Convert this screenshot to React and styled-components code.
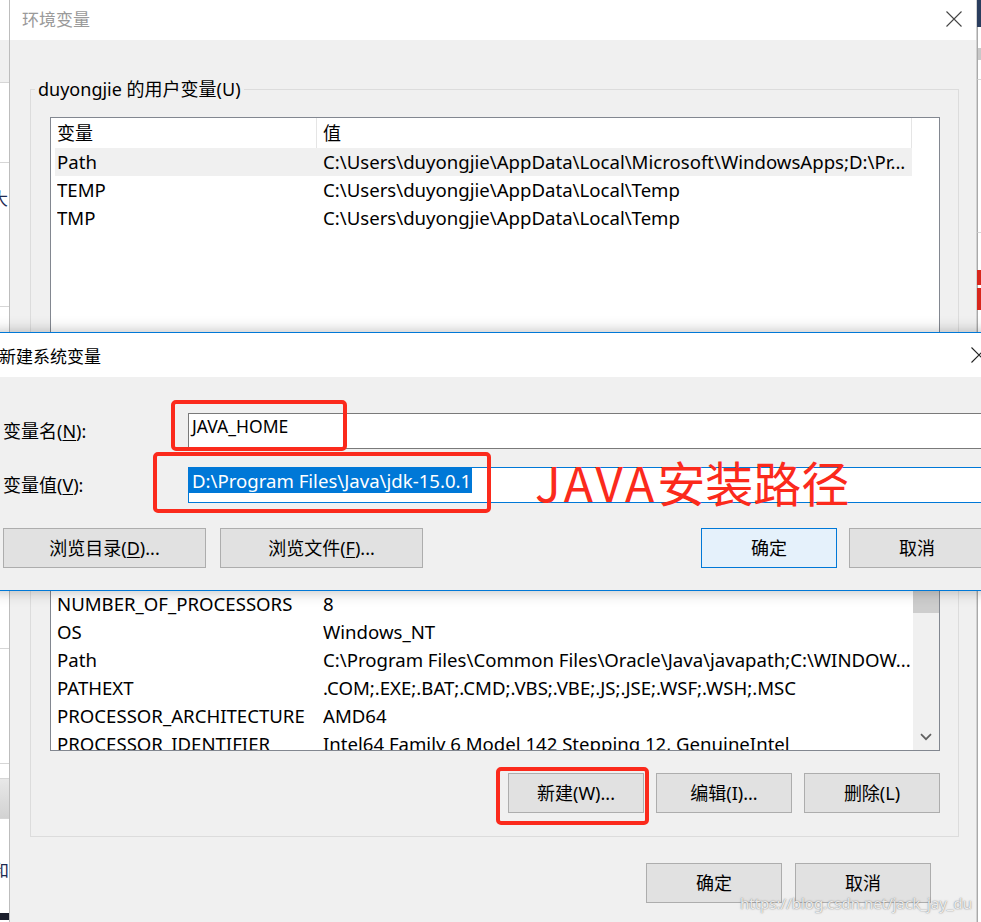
import React from 'react';
import styled, { createGlobalStyle } from 'styled-components';

const FONT = `"Noto Sans", "Noto Sans CJK SC", sans-serif`;

const GlobalStyle = createGlobalStyle`
  html, body { margin: 0; padding: 0; background: #fff; }
  body { font-family: ${FONT}; }
  *, *::before, *::after { box-sizing: border-box; }
`;

const Desktop = styled.div`
  position: relative;
  width: 981px;
  height: 922px;
  overflow: hidden;
  background: #fff;
  font-family: ${FONT};
  font-size: 18px;
  color: #000;
`;

/* ---------- background windows (slivers at the edges) ---------- */
const SideWindow = styled.div`
  position: absolute;
  top: 0;
  left: ${(p) => p.$left}px;
  width: ${(p) => p.$width}px;
  height: 922px;
  display: flex;
  flex-direction: column;
  background: #fff;
  overflow: hidden;
`;

const Strip = styled.div`
  flex-shrink: 0;
  height: ${(p) => p.$h}px;
  background: ${(p) => p.$bg || 'transparent'};
  border-bottom: ${(p) => (p.$line ? '1px solid #d6d6d6' : 'none')};
  border-left: ${(p) => (p.$edge ? '1px solid #a9a9a9' : 'none')};
`;

const SliverGlyph = styled.div`
  flex-shrink: 0;
  height: ${(p) => p.$h}px;
  line-height: ${(p) => p.$h}px;
  margin-left: ${(p) => p.$shift}px;
  font-size: 17px;
  color: #1d2a52;
  white-space: nowrap;
`;

/* ---------- main window ---------- */
const MainWindow = styled.div`
  position: absolute;
  left: 9px;
  top: 0;
  width: 968px;
  height: 922px;
  border-left: 1px solid #bdbdbd;
  border-right: 1px solid #d2d2d2;
  background: #f0f0f0;
  display: flex;
  flex-direction: column;
`;

const TitleBar = styled.div`
  flex-shrink: 0;
  height: ${(p) => p.$h}px;
  background: #fff;
  display: flex;
  align-items: center;
  justify-content: space-between;
  padding: 0 ${(p) => p.$pr}px ${(p) => p.$pb || 0}px ${(p) => p.$pl}px;
  color: ${(p) => (p.$inactive ? '#9a9a9a' : '#000')};
  font-size: 17px;
  white-space: nowrap;
`;

const CloseGlyph = styled.svg`
  display: block;
  flex-shrink: 0;
`;

const WindowBody = styled.div`
  flex: 1;
  display: flex;
  flex-direction: column;
  padding: 37px 17px 0 20px;
`;

const GroupBox = styled.fieldset`
  margin: ${(p) => p.$mt || 0}px 0 0 0;
  padding: 16px 18px 23px 19px;
  border: 1px solid #dcdcdc;
  min-width: 0;
  display: flex;
  flex-direction: column;
`;

const GroupLegend = styled.legend`
  margin-left: -15px;
  padding: 0 3px;
  font-size: 18px;
  line-height: 24px;
`;

const ListBox = styled.div`
  flex-shrink: 0;
  height: ${(p) => p.$h}px;
  border: 1px solid #828790;
  background: #fff;
  display: flex;
  overflow: hidden;
`;

const ListMain = styled.div`
  width: 862px;
  flex-shrink: 0;
  display: flex;
  flex-direction: column;
  overflow: hidden;
`;

const ListHeader = styled.div`
  flex-shrink: 0;
  height: 30px;
  display: flex;
`;

const HeaderCell = styled.div`
  width: ${(p) => p.$w}px;
  flex-shrink: 0;
  height: 30px;
  line-height: 30px;
  padding-left: 6px;
  border-right: 1px solid #e5e5e5;
  white-space: nowrap;
`;

const RowsViewport = styled.div`
  flex: 1;
  overflow: hidden;
`;

const RowsTrack = styled.div`
  display: flex;
  flex-direction: column;
  margin-top: ${(p) => -(p.$scroll || 0)}px;
`;

const Row = styled.div`
  flex-shrink: 0;
  display: flex;
  height: 28px;
  line-height: 28px;
  margin-left: 4px;
  width: 857px;
  padding-left: 2px;
  font-size: 18.6px;
  background: ${(p) => (p.$selected ? '#f0f0f0' : 'transparent')};
  white-space: nowrap;
`;

const NameCell = styled.div`
  width: 266px;
  flex-shrink: 0;
  overflow: hidden;
`;

const ValueCell = styled.div`
  flex: 1;
  min-width: 0;
  overflow: hidden;
`;

const ScrollGap = styled.div`
  flex: 1;
  background: #fff;
`;

const ScrollBar = styled.div`
  width: 26px;
  flex-shrink: 0;
  background: #f0f0f0;
  display: flex;
  flex-direction: column;
`;

const ScrollArrow = styled.div`
  flex-shrink: 0;
  height: 26px;
  display: flex;
  align-items: center;
  justify-content: center;
`;

const ScrollThumb = styled.div`
  flex-shrink: 0;
  height: ${(p) => p.$h}px;
  background: #cdcdcd;
`;

const ScrollTrack = styled.div`
  flex: 1;
`;

const ButtonRow = styled.div`
  display: flex;
  align-items: center;
  justify-content: ${(p) => p.$justify || 'flex-end'};
  gap: ${(p) => p.$gap || 12}px;
  margin-top: ${(p) => p.$mt || 0}px;
  margin-right: ${(p) => p.$mr || 0}px;
`;

const Button = styled.button`
  width: ${(p) => p.$w || 136}px;
  height: 40px;
  flex-shrink: 0;
  margin: 0;
  padding: 0;
  border: 1px solid ${(p) => (p.$default ? '#0078d7' : '#adadad')};
  background: ${(p) => (p.$default ? '#e5f1fb' : '#e1e1e1')};
  font-family: ${FONT};
  font-size: 18px;
  color: #000;
  line-height: 38px;
  white-space: nowrap;
`;

const Accel = styled.span`
  text-decoration: underline;
  text-underline-offset: 2px;
  text-decoration-thickness: 1px;
`;

/* ---------- dialog ---------- */
const Dialog = styled.div`
  position: absolute;
  left: -12px;
  top: 332px;
  width: 1010px;
  border: 1px solid #0078d7;
  background: #f0f0f0;
  box-shadow: 0 0 14px rgba(0, 0, 0, 0.28);
  display: flex;
  flex-direction: column;
`;

const DialogBody = styled.div`
  display: flex;
  flex-direction: column;
  padding: 36px 12px 22px 14px;
`;

const FieldRow = styled.div`
  display: flex;
  align-items: center;
  margin-top: ${(p) => p.$mt || 0}px;
`;

const FieldLabel = styled.div`
  flex: 0 0 185px;
  white-space: nowrap;
  line-height: 24px;
`;

const TextBox = styled.div`
  flex: 1;
  height: 36px;
  border: 1px solid ${(p) => (p.$focused ? '#0078d7' : '#7a7a7a')};
  background: #fff;
  display: flex;
  align-items: flex-start;
  padding-top: 0;
  white-space: nowrap;
  overflow: hidden;
`;

const BoxText = styled.span`
  line-height: 25px;
  padding: 0 1px 0 3px;
  font-size: ${(p) => (p.$selected ? '18.6px' : '17.5px')};
  background: ${(p) => (p.$selected ? '#0078d7' : 'transparent')};
  color: ${(p) => (p.$selected ? '#fff' : '#000')};
`;

const ButtonGroup = styled.div`
  display: flex;
  gap: ${(p) => p.$gap}px;
  margin-left: ${(p) => (p.$push ? 'auto' : '0')};
`;

/* ---------- annotations over the screenshot ---------- */
const RedBox = styled.div`
  position: absolute;
  left: ${(p) => p.$x}px;
  top: ${(p) => p.$y}px;
  width: ${(p) => p.$w}px;
  height: ${(p) => p.$h}px;
  border: 4px solid #fb2a1c;
  border-radius: 5px;
  pointer-events: none;
`;

const RedNote = styled.div`
  position: absolute;
  left: 535px;
  top: 457px;
  font-family: "Noto Sans CJK SC", sans-serif;
  font-size: 48px;
  line-height: 48px;
  color: #fb2a1c;
  white-space: nowrap;
`;

const LatinPart = styled.span`
  letter-spacing: 3px;
`;

const Watermark = styled.div`
  position: absolute;
  right: 9px;
  top: 893px;
  font-size: 15px;
  line-height: 20px;
  color: rgba(255, 255, 255, 0.85);
  text-shadow: 0 0 1px rgba(90, 90, 90, 0.7), 0 0 2px rgba(120, 120, 120, 0.5);
  white-space: nowrap;
`;

/* ---------- data ---------- */
const userRows = [
  { name: 'Path', value: 'C:\\Users\\duyongjie\\AppData\\Local\\Microsoft\\WindowsApps;D:\\Pr...', selected: true },
  { name: 'TEMP', value: 'C:\\Users\\duyongjie\\AppData\\Local\\Temp' },
  { name: 'TMP', value: 'C:\\Users\\duyongjie\\AppData\\Local\\Temp' },
];

const systemRows = [
  { name: 'CLASSPATH', value: '.;%JAVA_HOME%\\lib' },
  { name: 'ComSpec', value: 'C:\\WINDOWS\\system32\\cmd.exe' },
  { name: 'DriverData', value: 'C:\\Windows\\System32\\Drivers\\DriverData' },
  { name: 'NUMBER_OF_PROCESSORS', value: '8' },
  { name: 'OS', value: 'Windows_NT' },
  { name: 'Path', value: 'C:\\Program Files\\Common Files\\Oracle\\Java\\javapath;C:\\WINDOW...' },
  { name: 'PATHEXT', value: '.COM;.EXE;.BAT;.CMD;.VBS;.VBE;.JS;.JSE;.WSF;.WSH;.MSC' },
  { name: 'PROCESSOR_ARCHITECTURE', value: 'AMD64' },
  { name: 'PROCESSOR_IDENTIFIER', value: 'Intel64 Family 6 Model 142 Stepping 12, GenuineIntel' },
  { name: 'PROCESSOR_LEVEL', value: '6' },
  { name: 'PROCESSOR_REVISION', value: '8e0c' },
];

const CloseIcon = ({ color = '#333' }) => (
  <CloseGlyph width="16" height="16" viewBox="0 0 16 16">
    <path d="M0.5 0.5L15.5 15.5M15.5 0.5L0.5 15.5" stroke={color} strokeWidth="1.1" fill="none" />
  </CloseGlyph>
);

const ChevronDown = () => (
  <svg width="12" height="8" viewBox="0 0 12 8">
    <path d="M1 1.2L6 6.2L11 1.2" stroke="#606060" strokeWidth="1.7" fill="none" />
  </svg>
);

function VarList({ rows, height, scroll, withScrollbar }) {
  return (
    <ListBox $h={height}>
      <ListMain>
        <ListHeader>
          <HeaderCell $w={266}>变量</HeaderCell>
          <HeaderCell $w={595}>值</HeaderCell>
        </ListHeader>
        <RowsViewport>
          <RowsTrack $scroll={scroll}>
            {rows.map((r, i) => (
              <Row key={i} $selected={r.selected}>
                <NameCell>{r.name}</NameCell>
                <ValueCell>{r.value}</ValueCell>
              </Row>
            ))}
          </RowsTrack>
        </RowsViewport>
      </ListMain>
      {withScrollbar ? (
        <ScrollBar>
          <ScrollArrow />
          <ScrollThumb $h={89} />
          <ScrollTrack />
          <ScrollArrow>
            <ChevronDown />
          </ScrollArrow>
        </ScrollBar>
      ) : (
        <ScrollGap />
      )}
    </ListBox>
  );
}

export default function App() {
  return (
    <>
      <GlobalStyle />
      <Desktop>
        <SideWindow $left={0} $width={9}>
          <Strip $h={40} />
          <Strip $h={43} $bg="#f0f0f0" $line />
          <Strip $h={80} $line />
          <SliverGlyph $h={72} $shift={-9}>大</SliverGlyph>
          <Strip $h={72} $line />
          <Strip $h={342} $line />
          <Strip $h={115} $line />
          <Strip $h={15} $line />
          <Strip $h={40} $bg="linear-gradient(#e8e8e8, #d2d2d2)" $line />
          <Strip $h={37} />
          <SliverGlyph $h={30} $shift={-8}>和</SliverGlyph>
          <Strip $h={27} />
          <Strip $h={7} $bg="#1b1f2c" />
        </SideWindow>

        <SideWindow $left={977} $width={4}>
          <Strip $h={27} $bg="#2a3d5e" />
          <Strip $h={21} $edge />
          <Strip $h={12} $bg="#c8c8c8" $edge />
          <Strip $h={20} $edge $line />
          <Strip $h={153} $edge $line />
          <Strip $h={37} $edge />
          <Strip $h={15} $bg="#d8261c" />
          <Strip $h={3} $edge />
          <Strip $h={22} $bg="#d8261c" />
          <Strip $h={612} $edge />
        </SideWindow>

        <MainWindow>
          <TitleBar $h={40} $pl={12} $pr={14} $pb={3} $inactive>
            <span>环境变量</span>
            <CloseIcon color="#444" />
          </TitleBar>
          <WindowBody>
            <GroupBox>
              <GroupLegend>duyongjie 的用户变量(U)</GroupLegend>
              <VarList rows={userRows} height={240} scroll={0} />
              <ButtonRow $mt={22}>
                <Button>新建(N)...</Button>
                <Button>编辑(E)...</Button>
                <Button>删除(D)</Button>
              </ButtonRow>
            </GroupBox>

            <GroupBox $mt={14}>
              <GroupLegend>系统变量(S)</GroupLegend>
              <VarList rows={systemRows} height={254} scroll={22} withScrollbar />
              <ButtonRow $mt={22}>
                <Button>新建(W)...</Button>
                <Button>编辑(I)...</Button>
                <Button>删除(L)</Button>
              </ButtonRow>
            </GroupBox>

            <ButtonRow $mt={26} $gap={13} $mr={28}>
              <Button>确定</Button>
              <Button>取消</Button>
            </ButtonRow>
          </WindowBody>
        </MainWindow>

        <Dialog>
          <TitleBar $h={44} $pl={10} $pr={10}>
            <span>新建系统变量</span>
            <CloseIcon color="#222" />
          </TitleBar>
          <DialogBody>
            <FieldRow>
              <FieldLabel>
                变量名(<Accel>N</Accel>):
              </FieldLabel>
              <TextBox>
                <BoxText>JAVA_HOME</BoxText>
              </TextBox>
            </FieldRow>
            <FieldRow $mt={18}>
              <FieldLabel>
                变量值(<Accel>V</Accel>):
              </FieldLabel>
              <TextBox $focused>
                <BoxText $selected>D:\Program Files\Java\jdk-15.0.1</BoxText>
              </TextBox>
            </FieldRow>
            <ButtonRow $mt={25} $justify="flex-start" $gap={0}>
              <ButtonGroup $gap={14}>
                <Button $w={203}>
                  浏览目录(<Accel>D</Accel>)...
                </Button>
                <Button $w={203}>
                  浏览文件(<Accel>F</Accel>)...
                </Button>
              </ButtonGroup>
              <ButtonGroup $gap={12} $push>
                <Button $default>确定</Button>
                <Button>取消</Button>
              </ButtonGroup>
            </ButtonRow>
          </DialogBody>
        </Dialog>

        <RedBox $x={171} $y={400} $w={176} $h={51} />
        <RedBox $x={153} $y={452} $w={338} $h={61} />
        <RedBox $x={496} $y={767} $w={153} $h={58} />
        <RedNote>
          <LatinPart>JAVA</LatinPart>安装路径
        </RedNote>

        <Watermark>https://blog.csdn.net/jack_jay_du</Watermark>
      </Desktop>
    </>
  );
}
